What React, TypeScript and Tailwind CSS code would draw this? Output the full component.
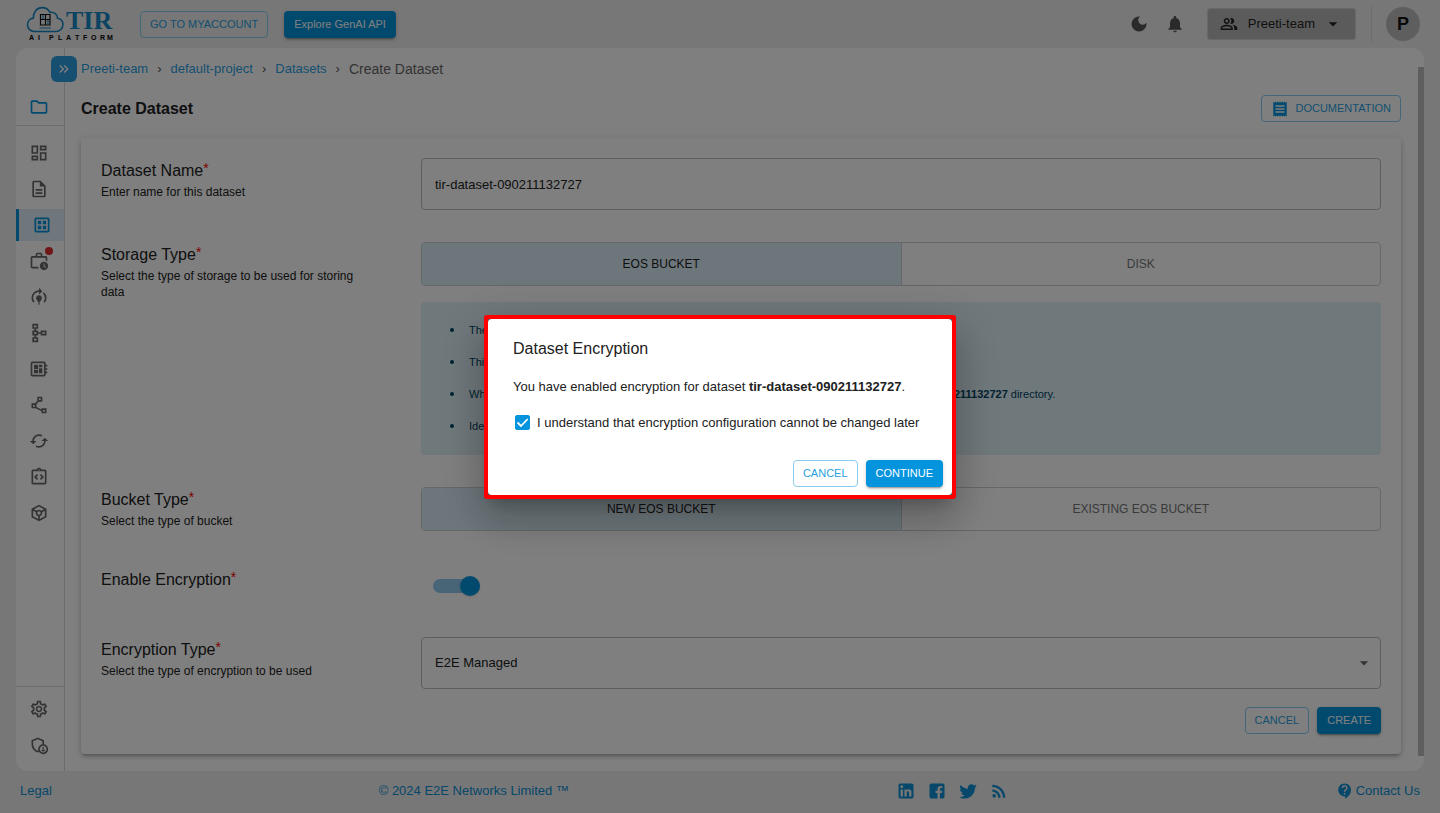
import { useId, useState } from "react";
import type { ReactNode } from "react";
import type { IconType } from "react-icons";
import {
  MdArrowDropDown,
  MdCached,
  MdContactSupport,
  MdDarkMode,
  MdKeyboardDoubleArrowRight,
  MdModelTraining,
  MdNotifications,
  MdOutlineAdminPanelSettings,
  MdOutlineDashboard,
  MdOutlineDataset,
  MdOutlineDescription,
  MdOutlineDeveloperBoard,
  MdOutlineFolder,
  MdOutlineIntegrationInstructions,
  MdOutlinePeopleAlt,
  MdOutlinePolyline,
  MdOutlineSchema,
  MdOutlineSettings,
  MdOutlineToken,
  MdOutlineWorkHistory,
  MdReceipt,
  MdRssFeed,
} from "react-icons/md";

const DATASET = "tir-dataset-090211132727";

const outlined =
  "flex h-[27px] items-center justify-center rounded border border-[#8acbf0] px-[9px] text-[11px] text-[#2a9fe0]";
const contained =
  "flex h-[27px] items-center justify-center rounded bg-[#0394dd] px-[10px] text-[11px] text-white shadow-[0_3px_1px_-2px_rgba(0,0,0,0.2),0_2px_2px_0_rgba(0,0,0,0.14),0_1px_5px_0_rgba(0,0,0,0.12)]";

function Logo() {
  return (
    <svg width="90" height="36" viewBox="0 0 90 36" role="img" aria-label="TIR AI Platform">
      <path
        d="M9 25.5C4.5 25.5 1.5 22.5 1.5 18.8c0-3.600 2.500-6.300 5.800-6.700C7.300 6 11 1.600 16 1.600c3.700 0 6.500 1.800 8 4.800 4.300-.6 7.300 2 7.600 5.900 3.200.5 5.300 3 5.300 6.300 0 3.900-2.900 6.900-7 6.900z"
        fill="none"
        stroke="#1787c4"
        strokeWidth="1.600"
      />
      <path d="M14.500 8.500h9.500v10.500h-9.500zM14.500 13.500h9.500M19.500 8.500v10.500" fill="none" stroke="#111" strokeWidth="1.200" />
      <path d="M17 9v4M22 14v4.500M13.500 22h11.500" fill="none" stroke="#1787c4" strokeWidth="1.200" />
      <text x="40" y="23" fontFamily="Liberation Serif, serif" fontWeight="700" fontSize="26" fill="#1787c4">
        TIR
      </text>
      <text
        x="3 12 23 32 40 49 57 65 74 81"
        y="34"
        fontFamily="Liberation Sans, sans-serif"
        fontWeight="700"
        fontSize="7"
        fill="#000"
      >
        AIPLATFORM
      </text>
    </svg>
  );
}

function Header() {
  return (
    <header className="flex h-12 shrink-0 items-center pr-5 pl-[26px]">
      <Logo />
      <a href="#account" className={`${outlined} ml-6`}>
        GO TO MYACCOUNT
      </a>
      <button type="button" className={`${contained} ml-4`}>
        Explore GenAI API
      </button>
      <div className="ml-auto flex items-center">
        <button type="button" aria-label="Dark mode">
          <MdDarkMode className="size-5 text-[#555]" />
        </button>
        <button type="button" aria-label="Notifications" className="ml-4">
          <MdNotifications className="size-5 text-[#555]" />
        </button>
        <button
          type="button"
          className="ml-[22px] flex h-8 items-center rounded-[3px] border border-[#d0d0d0] bg-[#b6b6b6] px-3 text-[13px] text-[#222]"
        >
          <MdOutlinePeopleAlt className="mr-2.5 size-[18px]" />
          Preeti-team
          <MdArrowDropDown className="ml-2 size-5" />
        </button>
        <div className="ml-[15px] h-9 w-px bg-[#d8d8d8]" />
        <button type="button" className="ml-3.5 size-[34px] rounded-full bg-[#bdbdbd] text-lg font-bold text-[#111]">
          P
        </button>
      </div>
    </header>
  );
}

type NavItem = { icon: IconType; label: string; active?: boolean; badge?: boolean };

const mainNav: NavItem[] = [
  { icon: MdOutlineDashboard, label: "Dashboard" },
  { icon: MdOutlineDescription, label: "Notebooks" },
  { icon: MdOutlineDataset, label: "Datasets", active: true },
  { icon: MdOutlineWorkHistory, label: "Jobs", badge: true },
  { icon: MdModelTraining, label: "Training" },
  { icon: MdOutlineSchema, label: "Pipelines" },
  { icon: MdOutlineDeveloperBoard, label: "Boards" },
  { icon: MdOutlinePolyline, label: "Vectors" },
  { icon: MdCached, label: "Sync" },
  { icon: MdOutlineIntegrationInstructions, label: "Integrations" },
  { icon: MdOutlineToken, label: "Models" },
];

const bottomNav: NavItem[] = [
  { icon: MdOutlineSettings, label: "Settings" },
  { icon: MdOutlineAdminPanelSettings, label: "Administration" },
];

function NavList({ items }: { items: NavItem[] }) {
  return (
    <ul className="flex flex-col gap-1">
      {items.map(({ icon: Icon, label, active, badge }) => (
        <li key={label}>
          <a
            href={`#${label}`}
            aria-label={label}
            className={
              active
                ? "flex h-8 items-center justify-center border-l-[3px] border-[#0394dd] bg-[#e0eef8] text-[#0394dd]"
                : "flex h-8 items-center justify-center pr-[3px] text-[#666]"
            }
          >
            <span className="relative">
              <Icon className="size-5" />
              {badge && <span className="absolute -top-1 -right-1 size-2 rounded-full bg-[#e02d2d]" />}
            </span>
          </a>
        </li>
      ))}
    </ul>
  );
}

function Sidebar() {
  return (
    <nav className="relative flex w-[49px] shrink-0 flex-col border-r border-[#d8d8d8]">
      <button
        type="button"
        aria-label="Expand menu"
        className="absolute top-2 left-[35px] flex size-[26px] items-center justify-center rounded-md bg-[#2f9fe0] text-white"
      >
        <MdKeyboardDoubleArrowRight className="size-4" />
      </button>
      <a
        href="#projects"
        aria-label="Projects"
        className="flex h-[78px] items-end justify-center border-b border-[#d8d8d8] pr-[3px] pb-2 text-[#0394dd]"
      >
        <MdOutlineFolder className="size-5" />
      </a>
      <div className="pt-[11px]">
        <NavList items={mainNav} />
      </div>
      <div className="mt-auto border-t border-[#d8d8d8] pt-1.5 pb-2.5">
        <NavList items={bottomNav} />
      </div>
    </nav>
  );
}

function Row({ title, hint, htmlFor, children }: { title: string; hint?: string; htmlFor?: string; children: ReactNode }) {
  return (
    <div className="flex">
      <div className="w-80 shrink-0">
        <label htmlFor={htmlFor} className="block text-base leading-[26px] text-[#212121]">
          {title}
          <sup className="top-[-3px] text-sm leading-none text-[#f00]">*</sup>
        </label>
        {hint && <p className="max-w-[265px] text-xs leading-4 text-[#212121]">{hint}</p>}
      </div>
      <div className="min-w-0 flex-1">{children}</div>
    </div>
  );
}

function ToggleGroup({ options }: { options: [string, string] }) {
  const [selected, setSelected] = useState(0);
  return (
    <div className="flex h-11 overflow-hidden rounded border border-[#c9d0d3]">
      {options.map((option, index) => (
        <button
          key={option}
          type="button"
          aria-pressed={selected === index}
          onClick={() => setSelected(index)}
          className={
            selected === index
              ? "flex-1 border-r border-[#c9d0d3] bg-[#daeef7] text-xs text-[#212121]"
              : "flex-1 text-xs text-[#757575]"
          }
        >
          {option}
        </button>
      ))}
    </div>
  );
}

function StorageNotes() {
  const notes: ReactNode[] = [
    "The dataset will be backed by an object storage bucket.",
    "This storage can be shared across many instances of the project.",
    <>
      When you mount a dataset on an instance, all data will be available under /datasets/<b>{DATASET}</b> directory.
    </>,
    "Ideal for large volumes of unstructured training data.",
  ];
  return (
    <ul className="mt-4 rounded bg-[#dff0f7] pt-3 pr-4 pb-[13px] pl-[29px] text-[11px] leading-8 text-[#014361]">
      {notes.map((note, index) => (
        <li key={index} className="flex items-center gap-[15px]">
          <span className="size-1 rounded-full bg-[#014361]" />
          <span>{note}</span>
        </li>
      ))}
    </ul>
  );
}

function DatasetForm() {
  const id = useId();
  const [name, setName] = useState(DATASET);
  return (
    <form
      onSubmit={(event) => event.preventDefault()}
      className="mt-4 rounded bg-white p-5 shadow-[0_3px_3px_-2px_rgba(0,0,0,0.2),0_3px_4px_0_rgba(0,0,0,0.14),0_1px_8px_0_rgba(0,0,0,0.12)]"
    >
      <div className="flex flex-col gap-8">
        <Row title="Dataset Name" hint="Enter name for this dataset" htmlFor={`${id}-name`}>
          <input
            id={`${id}-name`}
            value={name}
            onChange={(event) => setName(event.target.value)}
            className="h-[52px] w-full rounded border border-[#bdbdbd] px-[13px] text-[13px] text-[#212121]"
          />
        </Row>
        <Row title="Storage Type" hint="Select the type of storage to be used for storing data">
          <ToggleGroup options={["EOS BUCKET", "DISK"]} />
          <StorageNotes />
        </Row>
        <Row title="Bucket Type" hint="Select the type of bucket">
          <ToggleGroup options={["NEW EOS BUCKET", "EXISTING EOS BUCKET"]} />
        </Row>
        <div className="pt-1">
          <Row title="Enable Encryption" htmlFor={`${id}-encrypt`}>
            <div className="flex h-[38px] items-center pl-3">
              <input
                id={`${id}-encrypt`}
                type="checkbox"
                role="switch"
                defaultChecked
                className="flex h-3.5 w-[47px] appearance-none items-center rounded-full bg-[#8fcbef] before:size-5 before:rounded-full before:bg-[#bdbdbd] before:shadow checked:justify-end checked:before:bg-[#0394dd]"
              />
            </div>
          </Row>
        </div>
        <Row title="Encryption Type" hint="Select the type of encryption to be used" htmlFor={`${id}-type`}>
          <div className="relative">
            <select
              id={`${id}-type`}
              className="h-[52px] w-full appearance-none rounded border border-[#bdbdbd] bg-transparent px-[13px] text-[13px] text-[#212121]"
            >
              <option>E2E Managed</option>
              <option>User Managed</option>
            </select>
            <MdArrowDropDown className="pointer-events-none absolute top-4 right-[7px] size-5 text-[#666]" />
          </div>
        </Row>
      </div>
      <div className="mt-[18px] flex justify-end gap-2">
        <button type="button" className={outlined}>
          CANCEL
        </button>
        <button type="submit" className={contained}>
          CREATE
        </button>
      </div>
    </form>
  );
}

function Breadcrumbs() {
  return (
    <nav aria-label="Breadcrumb">
      <ol className="flex items-center gap-[9px] text-[13px] leading-5 text-[#2a9fe0]">
        {["Preeti-team", "default-project", "Datasets"].map((crumb) => (
          <li key={crumb} className="flex gap-[9px]">
            <a href={`#${crumb}`}>{crumb}</a>
            <span className="text-[#555]">›</span>
          </li>
        ))}
        <li className="text-sm leading-5 text-[#666]">Create Dataset</li>
      </ol>
    </nav>
  );
}

const socialPaths = [
  {
    label: "LinkedIn",
    d: "M19 3a2 2 0 0 1 2 2v14a2 2 0 0 1-2 2H5a2 2 0 0 1-2-2V5a2 2 0 0 1 2-2h14m-.5 15.5v-5.3a3.26 3.26 0 0 0-3.260-3.260c-.85 0-1.840.52-2.320 1.300v-1.110h-2.790v8.370h2.790v-4.930c0-.77.62-1.400 1.390-1.400a1.400 1.400 0 0 1 1.400 1.400v4.930h2.790M6.880 8.560a1.680 1.680 0 0 0 1.680-1.680c0-.93-.75-1.690-1.680-1.690a1.690 1.690 0 0 0-1.690 1.690c0 .93.76 1.680 1.690 1.680m1.390 9.940v-8.370H5.500v8.370h2.770z",
  },
  {
    label: "Facebook",
    d: "M5 3h14a2 2 0 0 1 2 2v14a2 2 0 0 1-2 2h-3.500v-6.600h2.400l.4-2.800h-2.800V9.900c0-.8.300-1.400 1.400-1.400h1.500V6c-.3 0-1.200-.1-2.200-.1-2.200 0-3.600 1.300-3.600 3.700v2h-2.400v2.800h2.400V21H5a2 2 0 0 1-2-2V5a2 2 0 0 1 2-2z",
  },
  {
    label: "Twitter",
    d: "M22.460 6c-.77.35-1.600.58-2.460.69.88-.53 1.560-1.370 1.880-2.380-.83.5-1.750.85-2.720 1.050C18.370 4.500 17.260 4 16 4c-2.350 0-4.270 1.920-4.270 4.290 0 .34.04.67.11.98C8.280 9.090 5.110 7.380 3 4.790c-.37.63-.58 1.370-.58 2.150 0 1.490.75 2.810 1.910 3.560-.71 0-1.370-.2-1.950-.5v.03c0 2.080 1.480 3.820 3.440 4.210a4.220 4.220 0 0 1-1.930.07 4.280 4.280 0 0 0 4 2.980 8.521 8.521 0 0 1-5.330 1.840c-.34 0-.68-.02-1.020-.06C3.440 20.290 5.700 21 8.120 21 16 21 20.330 14.460 20.330 8.790c0-.19 0-.37-.01-.56.84-.6 1.560-1.360 2.140-2.230z",
  },
];

function Footer() {
  return (
    <footer className="flex h-[42px] shrink-0 items-center justify-between px-5 pb-[3px] text-[13px] text-[#0c8fd4]">
      <a href="#legal">Legal</a>
      <span>© 2024 E2E Networks Limited ™</span>
      <div className="flex items-center gap-[11px]">
        {socialPaths.map(({ label, d }) => (
          <a key={label} href={`#${label}`} aria-label={label}>
            <svg viewBox="0 0 24 24" className="size-5" fill="currentColor">
              <path d={d} />
            </svg>
          </a>
        ))}
        <a href="#rss" aria-label="RSS feed">
          <MdRssFeed className="size-5" />
        </a>
      </div>
      <a href="#contact" className="flex items-center gap-0.5">
        <MdContactSupport className="size-[18px]" />
        Contact Us
      </a>
    </footer>
  );
}

function EncryptionDialog() {
  return (
    <div className="fixed inset-0 flex items-center justify-center bg-black/50">
      <div className="rounded-[3px] bg-[#555] outline-4 -outline-offset-4 outline-[#f00] shadow-[0_11px_15px_-7px_rgba(0,0,0,0.2),0_24px_38px_3px_rgba(0,0,0,0.14),0_9px_46px_8px_rgba(0,0,0,0.12)]">
        <div
          role="dialog"
          aria-modal="true"
          aria-labelledby="dialog-title"
          className="m-1 w-[464px] rounded bg-white pt-[17px] pr-[9px] pb-2 pl-[25px] text-[13px] text-[#212121]"
        >
          <h2 id="dialog-title" className="text-base leading-[26px]">
            Dataset Encryption
          </h2>
          <p className="mt-[15px] leading-5">
            You have enabled encryption for dataset <b>{DATASET}</b>.
          </p>
          <label className="mt-4 flex items-center gap-[7px] pl-0.5 leading-5">
            <span className="relative flex size-[15px]">
              <input
                type="checkbox"
                defaultChecked
                className="peer size-[15px] appearance-none rounded-xs border border-[#0394dd] checked:bg-[#0394dd]"
              />
              <svg
                viewBox="0 0 15 15"
                className="pointer-events-none absolute inset-0 hidden peer-checked:block"
                fill="none"
                stroke="#fff"
                strokeWidth="1.800"
              >
                <path d="M2.500 7.500l3.500 3.500 6.700-7" />
              </svg>
            </span>
            I understand that encryption configuration cannot be changed later
          </label>
          <div className="mt-[27px] flex justify-end gap-2">
            <button type="button" className={outlined}>
              CANCEL
            </button>
            <button type="button" className={contained}>
              CONTINUE
            </button>
          </div>
        </div>
      </div>
    </div>
  );
}

export default function App() {
  return (
    <div className="flex min-h-screen flex-col bg-[#eeeeee] font-['Liberation_Sans',Arial,sans-serif]">
      <Header />
      <div className="mx-4 flex flex-1 rounded-xl bg-white">
        <Sidebar />
        <main className="min-w-0 flex-1 pt-[11px] pr-[17px] pb-[17px] pl-4">
          <Breadcrumbs />
          <div className="mt-4 flex items-center justify-between">
            <h1 className="text-base font-bold text-[#212121]">Create Dataset</h1>
            <a href="#docs" className={outlined}>
              <MdReceipt className="mr-1.5 size-[18px] text-[#0394dd]" />
              DOCUMENTATION
            </a>
          </div>
          <DatasetForm />
        </main>
        <div className="mt-[19px] mb-[15px] w-1.5 bg-[#bcbcbc]" />
      </div>
      <Footer />
      <EncryptionDialog />
    </div>
  );
}
